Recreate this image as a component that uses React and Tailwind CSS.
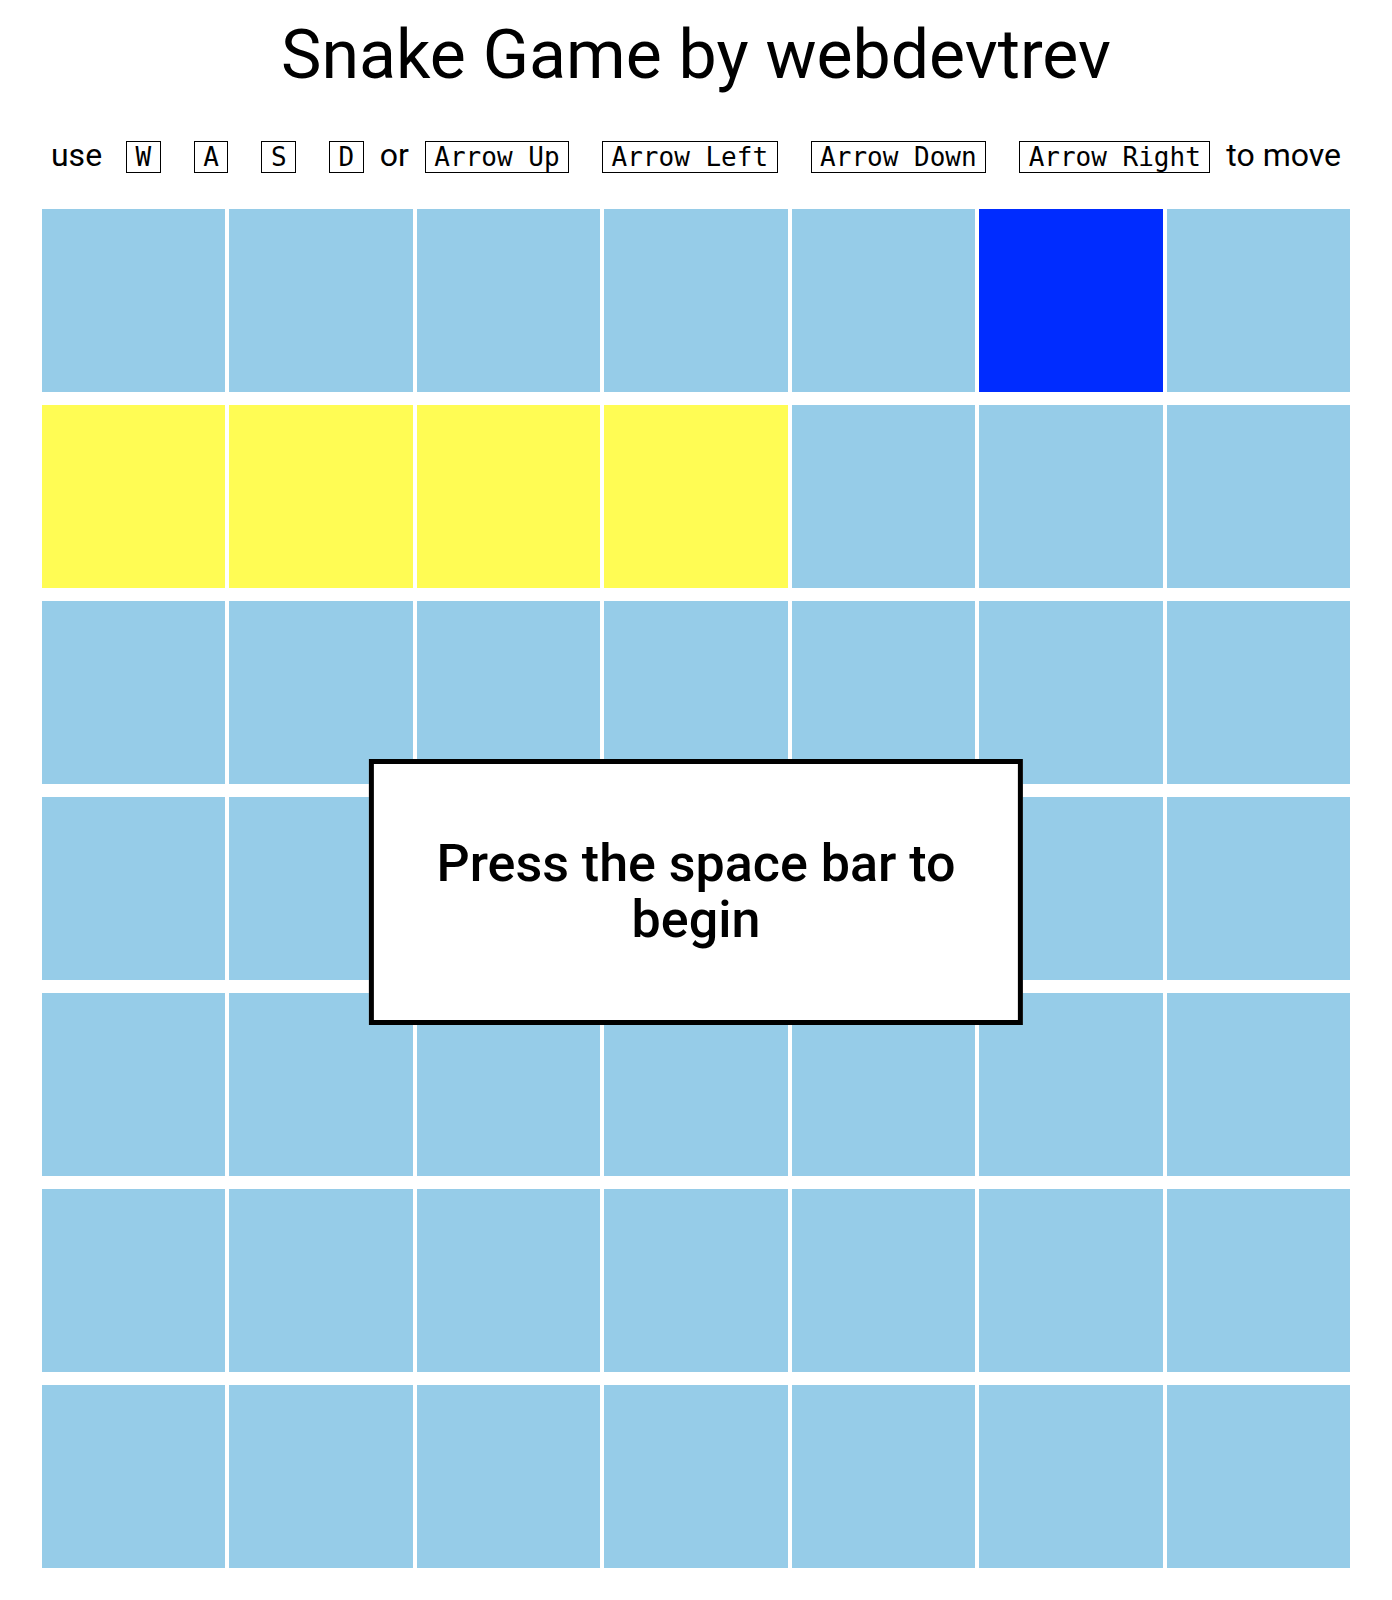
import { useState } from 'react';

const SIZE = 7;

// starting positions of the snake and the food
const initialSnake = [
  { x: 0, y: 1 },
  { x: 1, y: 1 },
  { x: 2, y: 1 },
  { x: 3, y: 1 },
];
const initialFood = { x: 5, y: 0 };

function Key({ children, className = '' }) {
  return (
    <kbd
      className={`border-[1.5px] border-black px-[8.5px] text-[26px] leading-[30px] ${className}`}
      style={{ fontFamily: '"DejaVu Sans Mono", monospace' }}
    >
      {children}
    </kbd>
  );
}

function Cell({ type }) {
  let color = 'bg-[#96cce8]';
  if (type === 'snake') color = 'bg-[#fffc54]';
  if (type === 'food') color = 'bg-[#002cff]';
  return <div className={`h-[183px] ${color}`} />;
}

export default function App() {
  const [snake] = useState(initialSnake);
  const [food] = useState(initialFood);
  const [started] = useState(false);

  const cells = [];
  for (let y = 0; y < SIZE; y++) {
    for (let x = 0; x < SIZE; x++) {
      let type = 'empty';
      if (snake.some((s) => s.x === x && s.y === y)) type = 'snake';
      if (food.x === x && food.y === y) type = 'food';
      cells.push(<Cell key={`${x}-${y}`} type={type} />);
    }
  }

  return (
    <div className="min-h-screen bg-white pb-[33px] text-black" style={{ fontFamily: 'Roboto, sans-serif' }}>
      <h1 className="pt-[15px] text-center text-[68px] leading-[80px]">Snake Game by webdevtrev</h1>

      {/* controls */}
      <div className="mt-[36px] flex items-baseline justify-center text-[32px]">
        <span>use</span>
        <Key className="ml-[24px]">W</Key>
        <Key className="ml-[33px]">A</Key>
        <Key className="ml-[33px]">S</Key>
        <Key className="ml-[33px]">D</Key>
        <span className="ml-[16px]">or</span>
        <Key className="ml-[16px]">Arrow Up</Key>
        <Key className="ml-[33px]">Arrow Left</Key>
        <Key className="ml-[33px]">Arrow Down</Key>
        <Key className="ml-[33px]">Arrow Right</Key>
        <span className="ml-[16px]">to move</span>
      </div>

      {/* board */}
      <div className="relative mx-auto mt-[30px] w-[94%]">
        <div className="grid grid-cols-7 gap-x-[4px] gap-y-[13px]">{cells}</div>

        {!started && (
          <div className="absolute left-1/2 top-[calc(50%+3px)] flex h-[266px] w-1/2 -translate-x-1/2 -translate-y-1/2 items-center justify-center border-[5px] border-black bg-white px-8 text-center text-[52px] font-medium leading-[56px]">
            Press the space bar to begin
          </div>
        )}
      </div>
    </div>
  );
}
